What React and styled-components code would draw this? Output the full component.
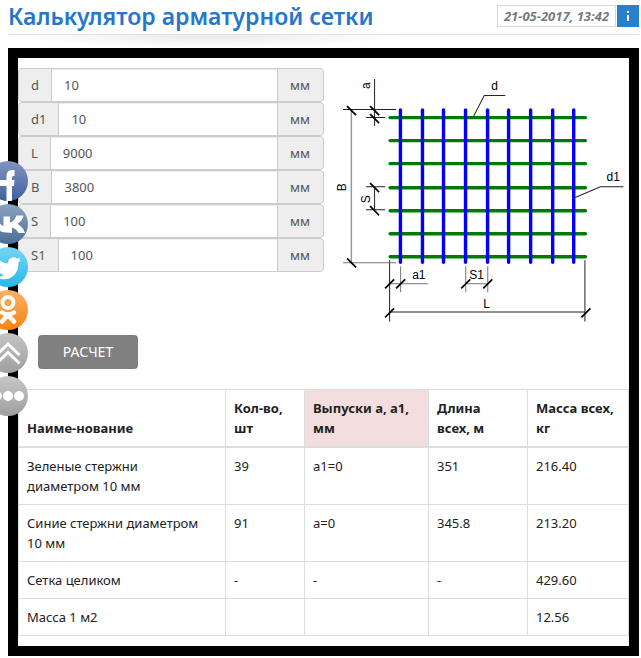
import React, { useState } from "react";
import styled, { createGlobalStyle } from "styled-components";

const GlobalStyle = createGlobalStyle`
  *, *::before, *::after { box-sizing: border-box; }
  body {
    margin: 0;
    background: #fff;
    color: #222;
    font: 13px/20px "Trebuchet MS", "Noto Sans", sans-serif;
  }
`;

const Page = styled.div`
  padding: 0 2px 2px 8px;
`;

const Header = styled.header`
  display: flex;
  align-items: flex-start;
  justify-content: space-between;
  height: 35px;
  border-bottom: 1px solid #dbe4ea;
`;

const Title = styled.h1`
  margin: 0;
  font-size: 23px;
  line-height: 32px;
  font-weight: 600;
  color: #2477cd;
  white-space: nowrap;
`;

const Meta = styled.div`
  display: flex;
  gap: 1px;
  padding-top: 5px;
`;

const Stamp = styled.time`
  width: 119px;
  height: 22px;
  border: 1px solid #d6d6d6;
  color: #737a80;
  font-size: 13px;
  line-height: 20px;
  font-weight: 700;
  font-style: italic;
  text-align: center;
  white-space: nowrap;
`;

const InfoLink = styled.a`
  display: flex;
  align-items: center;
  justify-content: center;
  width: 22px;
  height: 22px;
  background: #287fcd;
  color: #fff;
`;

const TitleShade = styled.div`
  width: 400px;
  max-width: 100%;
  height: 13px;
  background: radial-gradient(ellipse 50% 100% at 50% 0, #e9e9e9, #fff);
`;

const Frame = styled.main`
  border: 10px solid #000;
  padding: 10px 0;
`;

const Workspace = styled.div`
  display: grid;
  grid-template-columns: repeat(2, minmax(0, 1fr));
`;

const Fields = styled.form`
  display: flex;
  flex-direction: column;
`;

const Group = styled.div`
  display: flex;
  height: 34px;
  border: 1px solid #ccc;
  border-radius: 4px;
  overflow: hidden;
  background: #eee;
  color: #555;
`;

const Name = styled.label`
  flex: none;
  padding: 6px 12px;
`;

const Unit = styled.span`
  flex: none;
  width: 45px;
  padding: 6px 0;
  text-align: center;
`;

const Value = styled.input`
  flex: 1;
  min-width: 0;
  border: solid #ccc;
  border-width: 0 1px;
  padding: 0 12px;
  background: #fff;
  box-shadow: inset 0 1px 1px rgba(0, 0, 0, 0.08);
  color: #555;
  font: inherit;
  outline-offset: -2px;
`;

const Drawing = styled.svg`
  display: block;
  width: 100%;
  font: 12px "Liberation Sans", Arial, sans-serif;
`;

const Submit = styled.button`
  display: block;
  width: 100px;
  height: 34px;
  margin: 5px 20px 20px;
  border: 0;
  border-radius: 4px;
  background: #808080;
  color: #fff;
  font: inherit;
  font-size: 14px;
  cursor: pointer;
`;

const Results = styled.table`
  width: 100%;
  table-layout: fixed;
  border-collapse: collapse;
  white-space: pre-line;
`;

const Col = styled.col`
  width: ${(p) => p.$width};
`;

const Head = styled.th`
  padding: 8px;
  border: 1px solid #ddd;
  border-bottom-width: 2px;
  background: ${(p) => (p.$marked ? "#f2dede" : "transparent")};
  font-weight: 700;
  text-align: left;
  vertical-align: bottom;
`;

const Cell = styled.td`
  padding: 8px;
  border: 1px solid #ddd;
  vertical-align: top;
`;

const ShareRail = styled.nav`
  position: fixed;
  left: -12px;
  top: 161px;
  display: flex;
  flex-direction: column;
  gap: 3px;
`;

const ShareLink = styled.a`
  display: block;
  width: 40px;
  height: 40px;
  border-radius: 50%;
  overflow: hidden;
  background: linear-gradient(${(p) => p.$from}, ${(p) => p.$to});
  color: #fff;

  svg { display: block; }
`;

const fields = [
  { id: "d", value: "10" },
  { id: "d1", value: "10" },
  { id: "L", value: "9000" },
  { id: "B", value: "3800" },
  { id: "S", value: "100" },
  { id: "S1", value: "100" },
];

const columns = [
  { title: "Наиме-нование", width: "auto" },
  { title: "Кол-во, шт", width: "79px" },
  { title: "Выпуски a, a1, мм", width: "124px", marked: true },
  { title: "Длина\nвсех, м", width: "99px" },
  { title: "Масса всех, кг", width: "101px" },
];

const rows = [
  ["Зеленые стержни\nдиаметром 10 мм", "39", "a1=0", "351", "216.40"],
  ["Синие стержни диаметром\n10 мм", "91", "a=0", "345.8", "213.20"],
  ["Сетка целиком", "-", "-", "-", "429.60"],
  ["Масса 1 м2", "", "", "", "12.56"],
];

const shares = [
  {
    name: "Facebook", from: "#8294c1", to: "#41609f",
    icon: <path fill="#fff" d="M18.500 40V25H11V19H18.500V15.500C18.500 11 20.500 9 25 9H26.500V15H25.500C24.500 15 24 15.500 24 16.500V19H26.500L26 25H24V40Z" />,
  },
  {
    name: "ВКонтакте", from: "#8ba3bf", to: "#4b6f97",
    icon: <path fill="#fff" d="M18.500 28.500C10.500 28.500 6 23 4 12.500H9.500C10.200 18 12.300 21 15.500 22V12.500H22V18.500C25 18 27 15.500 28.500 11.500L35.500 11.500C35 15 32.500 18 29.500 20C33 21.500 35.500 24.500 37 29H30.500C29 26 26.500 24 24 23.500V29Z" />,
  },
  {
    name: "Twitter", from: "#75d4f3", to: "#29b8eb",
    icon: <path fill="#fff" d="M33 12.500C32 13 31.200 13.200 30.200 13.300C31.200 12.600 32 11.700 32.300 10.500C31.200 11.100 30.200 11.500 29 11.700C26 8.500 19.500 10.500 20.300 16.500C16 16.300 12.300 14.300 9.500 11.200C8 14 8.700 17 11 18.800C10.200 18.800 9.500 18.500 8.800 18.200C8.800 21 10.700 23.200 13.300 23.900C12.500 24.100 11.700 24.100 10.900 24C11.600 26.200 13.600 27.600 16 27.800C13.700 29.600 11 30.300 8.200 30C18 36 31 30 30.500 15.200C31.500 14.400 32.300 13.500 33 12.500Z" />,
  },
  {
    name: "Одноклассники", from: "#fbb169", to: "#f8830f",
    icon: (
      <g fill="none" stroke="#fff" strokeLinecap="round">
        <circle cx="20" cy="12.500" r="5.500" strokeWidth="4" />
        <path strokeWidth="4.500" d="M14 22.500Q20 26.500 26 22.500M20 25L14 31.500M20 25L26 31.500" />
      </g>
    ),
  },
  {
    name: "Наверх", from: "#c6c6c6", to: "#9f9f9f",
    icon: <path fill="none" stroke="#fff" strokeWidth="3" d="M8.500 22L20 11L31.500 22M8.500 30.500L20 19.500L31.500 30.500" />,
  },
  {
    name: "Ещё", from: "#c6c6c6", to: "#9f9f9f",
    icon: (
      <g fill="#fff">
        <circle cx="9" cy="20" r="5" />
        <circle cx="20" cy="20" r="5" />
        <circle cx="31" cy="20" r="5" />
      </g>
    ),
  },
];

const greenBars = [117, 140, 163, 187, 210, 233, 256];
const blueBars = [400, 422, 443, 465, 487, 508, 530, 552, 573];
const downTicks = [[351, 110], [374, 110], [374, 118], [374, 187], [374, 210], [351, 262]];
const upTicks = [[389, 283], [400, 283], [465, 283], [487, 283], [389, 312], [585, 312]];

function MeshDrawing() {
  return (
    <Drawing viewBox="324 68 305 262" role="img" aria-label="Схема арматурной сетки">
      <g stroke="#007b00" strokeWidth="3.400" strokeLinecap="round">
        {greenBars.map((y) => <path key={y} d={`M390 ${y}.500H585`} />)}
      </g>
      <g stroke="#0000fc" strokeWidth="3.400" strokeLinecap="round">
        {blueBars.map((x) => <path key={x} d={`M${x}.300 110V262`} />)}
      </g>
      <path stroke="#999" strokeWidth="1.500" d="M351.300 109V262" />
      <g fill="none" stroke="#222" strokeWidth="1">
        <path d="M343 109.500H396M374.500 79V126M366 117.500H385" />
        <path d="M366 186.500H385M374.500 187V210M366 209.500H385" />
        <path d="M389.500 260V321M389 311.500H585M584.500 260V321" />
        <path d="M473 117L484 95.500H505M573 198L600 186.500H623" />
      </g>
      <path fill="none" stroke="#777" d="M343 262.500H396M389 283.500H428M400.500 266V292M465 283.500H487M465.500 266V292M487.500 266V292" />
      <g stroke="#000" strokeWidth="1.700">
        {downTicks.map(([x, y]) => <path key={`${x}-${y}`} d={`M${x - 4} ${y - 4}l9 9`} />)}
        {upTicks.map(([x, y]) => <path key={`${x}-${y}`} d={`M${x - 4} ${y + 5}l9 -9`} />)}
      </g>
      <g fill="#000">
        <text x="491" y="90">d</text>
        <text x="606" y="181">d1</text>
        <text x="412" y="279">a1</text>
        <text x="469" y="279">S1</text>
        <text x="483" y="308">L</text>
        <text transform="translate(370 89) rotate(-90)">a</text>
        <text transform="translate(346 191) rotate(-90)">B</text>
        <text transform="translate(370 203) rotate(-90)">S</text>
      </g>
    </Drawing>
  );
}

function Field({ id, initial }) {
  const [value, setValue] = useState(initial);
  return (
    <Group>
      <Name htmlFor={id}>{id}</Name>
      <Value id={id} value={value} onChange={(e) => setValue(e.target.value)} />
      <Unit>мм</Unit>
    </Group>
  );
}

export default function App() {
  return (
    <>
      <GlobalStyle />
      <Page>
        <Header>
          <Title>Калькулятор арматурной сетки</Title>
          <Meta>
            <Stamp dateTime="2017-05-21T13:42">21-05-2017, 13:42</Stamp>
            <InfoLink href="#info" aria-label="Информация">
              <svg width="4" height="12" viewBox="0 0 4 12" fill="currentColor" aria-hidden="true">
                <path d="M1 1h2v2H1zM1 5h2v6H1z" />
              </svg>
            </InfoLink>
          </Meta>
        </Header>
        <TitleShade />
        <Frame>
          <Workspace>
            <Fields id="mesh" onSubmit={(e) => e.preventDefault()}>
              {fields.map((f) => <Field key={f.id} id={f.id} initial={f.value} />)}
            </Fields>
            <MeshDrawing />
          </Workspace>
          <Submit type="submit" form="mesh">РАСЧЕТ</Submit>
          <Results>
            <colgroup>
              {columns.map((c) => <Col key={c.title} $width={c.width} />)}
            </colgroup>
            <thead>
              <tr>
                {columns.map((c) => <Head key={c.title} scope="col" $marked={c.marked}>{c.title}</Head>)}
              </tr>
            </thead>
            <tbody>
              {rows.map((row) => (
                <tr key={row[0]}>
                  {row.map((text, i) => <Cell key={columns[i].title}>{text}</Cell>)}
                </tr>
              ))}
            </tbody>
          </Results>
        </Frame>
      </Page>
      <ShareRail aria-label="Поделиться">
        {shares.map((s) => (
          <ShareLink key={s.name} href="#share" aria-label={s.name} $from={s.from} $to={s.to}>
            <svg width="40" height="40" viewBox="0 0 40 40" aria-hidden="true">{s.icon}</svg>
          </ShareLink>
        ))}
      </ShareRail>
    </>
  );
}
